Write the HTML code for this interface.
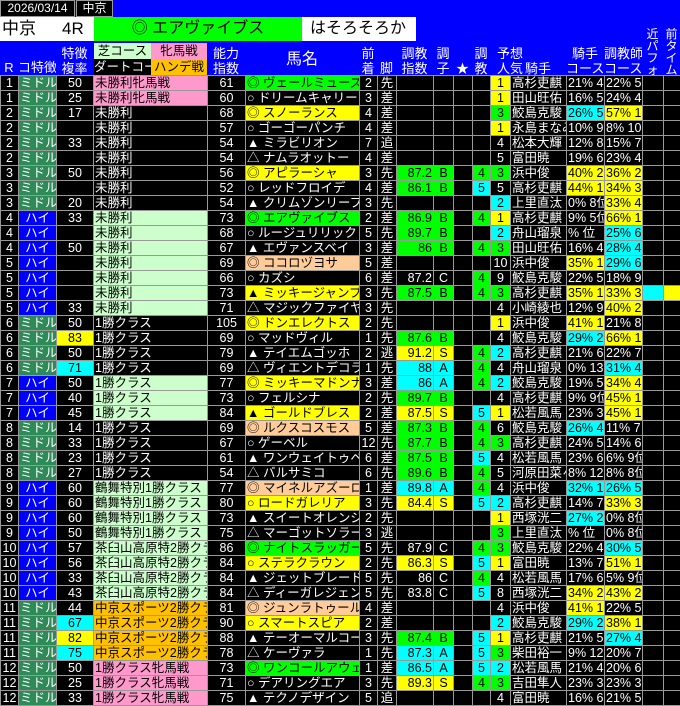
<!DOCTYPE html>
<html><head><meta charset="utf-8"><style>
*{margin:0;padding:0;box-sizing:border-box}
body{width:680px;height:705px;background:#0000ff;overflow:hidden;position:relative;font-family:"Liberation Sans","Noto Sans CJK JP",sans-serif;color:#fff}
.a{position:absolute;white-space:nowrap;overflow:hidden}
table{position:absolute;left:0;top:75px;border-collapse:collapse;table-layout:fixed;width:680px}
td{height:15px;border:1px solid #999;background:#000;color:#fff;font-size:12.5px;line-height:13px;padding:0 1px;text-align:center;white-space:nowrap;overflow:hidden}
td.L{text-align:left}td.r{text-align:right}
.m{background:#2e8b57}.h{background:#0000ff}
.g{background:#00ff00;color:#000}.y{background:#ffff00;color:#000}.c{background:#00ffff;color:#000}
.p{background:#ffcc99;color:#000}.k{background:#ff99cc;color:#000}.l{background:#ccffcc;color:#000}.o{background:#ffc000;color:#000}
.hd{font-size:13px;line-height:15px;text-align:center;color:#fff}
</style></head><body>
<div class="a" style="left:0;top:0;width:75px;height:17px;background:#000;border:1px solid #999;font-size:12px;line-height:15px;text-align:center">2026/03/14</div>
<div class="a" style="left:76px;top:0;width:37px;height:17px;background:#000;border:1px solid #999;font-size:12px;line-height:15px;text-align:center">中京</div>
<div class="a" style="left:0;top:17px;width:94px;height:24px;background:#fff;color:#000;font-size:17px;line-height:24px;padding-left:2px">中京<span style="margin-left:26px">4R</span></div>
<div class="a" style="left:94px;top:17px;width:208px;height:24px;background:#00ff00;color:#000;font-size:16px;line-height:24px;text-align:center">◎ エアヴァイブス</div>
<div class="a" style="left:302px;top:17px;width:114px;height:24px;background:#fff;color:#000;font-size:16px;line-height:24px;padding-left:8px">はそろそろか</div>

<div class="a hd" style="left:0;top:60px;width:18px">R</div>
<div class="a hd" style="left:18px;top:60px;width:38px">コ特徴</div>
<div class="a hd" style="left:56px;top:46px;width:37px">特徴<br>複率</div>
<div class="a" style="left:94px;top:43px;width:57px;height:16px;background:#ccffcc;color:#000;font-size:12.5px;line-height:16px;text-align:center">芝コース</div>
<div class="a" style="left:151px;top:43px;width:56px;height:16px;background:#ff99cc;color:#000;font-size:12.5px;line-height:16px;text-align:center">牝馬戦</div>
<div class="a" style="left:94px;top:59px;width:57px;height:16px;background:#000;color:#fff;font-size:12.5px;line-height:16px">ダートコー.</div>
<div class="a" style="left:151px;top:59px;width:56px;height:16px;background:#ffc000;color:#000;font-size:12.5px;line-height:16px;text-align:center">ハンデ戦</div>
<div class="a hd" style="left:207px;top:46px;width:38px">能力<br>指数</div>
<div class="a hd" style="left:245px;top:50px;width:114px;font-size:16px;line-height:20px">馬名</div>
<div class="a hd" style="left:359px;top:46px;width:18px">前<br>着</div>
<div class="a hd" style="left:377px;top:61px;width:19px">脚</div>
<div class="a hd" style="left:396px;top:46px;width:37px">調教<br>指数</div>
<div class="a hd" style="left:433px;top:46px;width:20px">調<br>子</div>
<div class="a hd" style="left:453px;top:61px;width:19px">★</div>
<div class="a hd" style="left:472px;top:46px;width:18px">調<br>教</div>
<div class="a hd" style="left:490px;top:46px;width:40px">予想<br>人気</div>
<div class="a hd" style="left:566px;top:61px;width:1px"></div>
<div class="a hd" style="left:510px;top:61px;width:56px">騎手</div>
<div class="a hd" style="left:566px;top:46px;width:38px">騎手<br>コース</div>
<div class="a hd" style="left:604px;top:46px;width:38px">調教師<br>コース</div>
<div class="a hd" style="left:642px;top:28px;width:21px;line-height:12px;font-size:12px">近<br>パ<br>フ<br>ォ</div>
<div class="a hd" style="left:663px;top:28px;width:17px;line-height:12px;font-size:12px">前<br>タ<br>イ<br>ム</div>

<table>
<colgroup><col style="width:18px"><col style="width:38px"><col style="width:37px"><col style="width:114px"><col style="width:38px"><col style="width:114px"><col style="width:18px"><col style="width:19px"><col style="width:37px"><col style="width:20px"><col style="width:19px"><col style="width:18px"><col style="width:20px"><col style="width:56px"><col style="width:38px"><col style="width:38px"><col style="width:21px"><col style="width:17px"></colgroup>
<tr><td>1</td><td class=m>ミドル</td><td>50</td><td class="L k">未勝利牝馬戦</td><td>61</td><td class="L g">◎ ヴェールミューズ</td><td>2</td><td>先</td><td></td><td></td><td></td><td></td><td class=y>1</td><td class=L>高杉吏麒</td><td class=L>21% 4·</td><td class=L>22% 5·</td><td></td><td></td></tr>
<tr><td>1</td><td class=m>ミドル</td><td>25</td><td class="L k">未勝利牝馬戦</td><td>60</td><td class=L>○ ドリームキャリー</td><td>3</td><td>差</td><td></td><td></td><td></td><td></td><td class=y>1</td><td class=L>田山旺佑</td><td class=L>16% 5·</td><td class=L>24% 4·</td><td></td><td></td></tr>
<tr><td>2</td><td class=m>ミドル</td><td>17</td><td class=L>未勝利</td><td>68</td><td class="L y">◎ スノーランス</td><td>4</td><td>差</td><td></td><td></td><td></td><td></td><td class=g>3</td><td class=L>鮫島克駿</td><td class="L c">26% 5·</td><td class="L y">57% 1·</td><td></td><td></td></tr>
<tr><td>2</td><td class=m>ミドル</td><td></td><td class=L>未勝利</td><td>57</td><td class=L>○ ゴーゴーパンチ</td><td>4</td><td>差</td><td></td><td></td><td></td><td></td><td class=y>1</td><td class=L>永島まなみ</td><td class=L>10% 9·</td><td class=L>8% 10·</td><td></td><td></td></tr>
<tr><td>2</td><td class=m>ミドル</td><td>33</td><td class=L>未勝利</td><td>54</td><td class=L>▲ ミラビリオン</td><td>7</td><td>追</td><td></td><td></td><td></td><td></td><td>4</td><td class=L>松本大輝</td><td class=L>12% 8·</td><td class=L>15% 7·</td><td></td><td></td></tr>
<tr><td>2</td><td class=m>ミドル</td><td></td><td class=L>未勝利</td><td>54</td><td class=L>△ ナムラオットー</td><td>4</td><td>差</td><td></td><td></td><td></td><td></td><td>5</td><td class=L>富田暁</td><td class=L>19% 6·</td><td class=L>23% 4·</td><td></td><td></td></tr>
<tr><td>3</td><td class=m>ミドル</td><td>50</td><td class=L>未勝利</td><td>56</td><td class="L y">◎ アピラーシャ</td><td>3</td><td>先</td><td class="r g">87.2</td><td class=g>B</td><td></td><td class=g>4</td><td class=g>3</td><td class=L>浜中俊</td><td class="L y">40% 2·</td><td class="L y">36% 2·</td><td></td><td></td></tr>
<tr><td>3</td><td class=m>ミドル</td><td></td><td class=L>未勝利</td><td>52</td><td class=L>○ レッドフロイデ</td><td>4</td><td>差</td><td class="r g">86.1</td><td class=g>B</td><td></td><td class=c>5</td><td>5</td><td class=L>高杉吏麒</td><td class="L y">44% 1·</td><td class="L y">34% 3·</td><td></td><td></td></tr>
<tr><td>3</td><td class=m>ミドル</td><td>20</td><td class=L>未勝利</td><td>54</td><td class=L>▲ クリムゾンリーフ</td><td>3</td><td>先</td><td></td><td></td><td></td><td></td><td class=c>2</td><td class=L>上里直汰</td><td class=L>0% 8位</td><td class="L y">33% 4·</td><td></td><td></td></tr>
<tr><td>4</td><td class=h>ハイ</td><td>33</td><td class="L l">未勝利</td><td>73</td><td class="L g">◎ エアヴァイブス</td><td>2</td><td>差</td><td class="r g">86.9</td><td class=g>B</td><td></td><td class=g>4</td><td class=y>1</td><td class=L>高杉吏麒</td><td class=L>9% 5位</td><td class="L y">66% 1·</td><td></td><td></td></tr>
<tr><td>4</td><td class=h>ハイ</td><td></td><td class="L l">未勝利</td><td>68</td><td class=L>○ ルージュリリック</td><td>5</td><td>先</td><td class="r g">89.7</td><td class=g>B</td><td></td><td></td><td class=c>2</td><td class=L>舟山瑠泉</td><td class=L>% 位</td><td class="L c">25% 6·</td><td></td><td></td></tr>
<tr><td>4</td><td class=h>ハイ</td><td>50</td><td class="L l">未勝利</td><td>67</td><td class=L>▲ エヴァンスベイ</td><td>3</td><td>差</td><td class="r g">86</td><td class=g>B</td><td></td><td class=g>4</td><td class=g>3</td><td class=L>田山旺佑</td><td class=L>16% 4·</td><td class="L c">28% 4·</td><td></td><td></td></tr>
<tr><td>5</td><td class=h>ハイ</td><td></td><td class="L l">未勝利</td><td>69</td><td class="L p">◎ ココロヅヨサ</td><td>5</td><td>差</td><td></td><td></td><td></td><td></td><td>10</td><td class=L>浜中俊</td><td class="L y">35% 1·</td><td class="L c">29% 6·</td><td></td><td></td></tr>
<tr><td>5</td><td class=h>ハイ</td><td></td><td class="L l">未勝利</td><td>66</td><td class=L>○ カズシ</td><td>6</td><td>差</td><td class=r>87.2</td><td>C</td><td></td><td class=g>4</td><td>9</td><td class=L>鮫島克駿</td><td class=L>22% 5·</td><td class=L>18% 9·</td><td></td><td></td></tr>
<tr><td>5</td><td class=h>ハイ</td><td></td><td class="L l">未勝利</td><td>73</td><td class="L y">▲ ミッキージャンプ</td><td>3</td><td>先</td><td class="r g">87.5</td><td class=g>B</td><td></td><td class=g>4</td><td class=g>3</td><td class=L>高杉吏麒</td><td class="L y">35% 1·</td><td class="L y">33% 3·</td><td class=c></td><td class=y></td></tr>
<tr><td>5</td><td class=h>ハイ</td><td>33</td><td class="L l">未勝利</td><td>71</td><td class=L>△ マジックファイヤー</td><td>3</td><td>先</td><td></td><td></td><td></td><td></td><td>4</td><td class=L>小崎綾也</td><td class=L>12% 9·</td><td class="L y">40% 2·</td><td></td><td></td></tr>
<tr><td>6</td><td class=m>ミドル</td><td>50</td><td class=L>1勝クラス</td><td>105</td><td class="L y">◎ ドンエレクトス</td><td>2</td><td>先</td><td></td><td></td><td></td><td></td><td class=y>1</td><td class=L>浜中俊</td><td class="L y">41% 1·</td><td class=L>21% 8·</td><td></td><td></td></tr>
<tr><td>6</td><td class=m>ミドル</td><td class=y>83</td><td class=L>1勝クラス</td><td>69</td><td class=L>○ マッドヴィル</td><td>1</td><td>先</td><td class="r g">87.6</td><td class=g>B</td><td></td><td></td><td>4</td><td class=L>鮫島克駿</td><td class="L c">29% 2·</td><td class="L y">66% 1·</td><td></td><td></td></tr>
<tr><td>6</td><td class=m>ミドル</td><td>50</td><td class=L>1勝クラス</td><td>79</td><td class=L>▲ テイエムゴッホ</td><td>2</td><td>逃</td><td class="r y">91.2</td><td class=y>S</td><td></td><td class=g>4</td><td class=c>2</td><td class=L>高杉吏麒</td><td class=L>21% 6·</td><td class=L>22% 7·</td><td></td><td></td></tr>
<tr><td>6</td><td class=m>ミドル</td><td class=c>71</td><td class=L>1勝クラス</td><td>69</td><td class=L>△ ヴィエントデコラ</td><td>1</td><td>先</td><td class="r c">88</td><td class=c>A</td><td></td><td class=g>4</td><td>4</td><td class=L>舟山瑠泉</td><td class=L>0% 13</td><td class="L c">31% 4·</td><td></td><td></td></tr>
<tr><td>7</td><td class=h>ハイ</td><td>50</td><td class="L l">1勝クラス</td><td>77</td><td class="L y">◎ ミッキーマドンナ</td><td>3</td><td>差</td><td class="r c">86</td><td class=c>A</td><td></td><td class=g>4</td><td class=c>2</td><td class=L>鮫島克駿</td><td class=L>19% 5·</td><td class="L y">34% 4·</td><td></td><td></td></tr>
<tr><td>7</td><td class=h>ハイ</td><td>40</td><td class="L l">1勝クラス</td><td>73</td><td class=L>○ フェルシナ</td><td>2</td><td>先</td><td class="r g">89.7</td><td class=g>B</td><td></td><td></td><td>4</td><td class=L>高杉吏麒</td><td class=L>9% 9位</td><td class="L y">45% 1·</td><td></td><td></td></tr>
<tr><td>7</td><td class=h>ハイ</td><td>45</td><td class="L l">1勝クラス</td><td>84</td><td class="L y">▲ ゴールドブレス</td><td>2</td><td>差</td><td class="r y">87.5</td><td class=y>S</td><td></td><td class=c>5</td><td class=y>1</td><td class=L>松若風馬</td><td class=L>23% 3·</td><td class="L y">45% 1·</td><td></td><td></td></tr>
<tr><td>8</td><td class=m>ミドル</td><td>14</td><td class=L>1勝クラス</td><td>69</td><td class="L p">◎ ルクスコスモス</td><td>5</td><td>差</td><td class="r g">87.3</td><td class=g>B</td><td></td><td class=g>4</td><td>6</td><td class=L>鮫島克駿</td><td class="L c">26% 4·</td><td class=L>11% 7·</td><td></td><td></td></tr>
<tr><td>8</td><td class=m>ミドル</td><td>33</td><td class=L>1勝クラス</td><td>67</td><td class=L>○ ゲーベル</td><td>12</td><td>先</td><td class="r g">87.7</td><td class=g>B</td><td></td><td class=g>4</td><td class=g>3</td><td class=L>高杉吏麒</td><td class=L>24% 5·</td><td class=L>14% 6·</td><td></td><td></td></tr>
<tr><td>8</td><td class=m>ミドル</td><td>23</td><td class=L>1勝クラス</td><td>61</td><td class=L>▲ ワンウェイトゥベル</td><td>6</td><td>差</td><td class="r g">87.5</td><td class=g>B</td><td></td><td class=c>5</td><td>4</td><td class=L>松若風馬</td><td class=L>23% 6·</td><td class=L>6% 9位</td><td></td><td></td></tr>
<tr><td>8</td><td class=m>ミドル</td><td>27</td><td class=L>1勝クラス</td><td>54</td><td class=L>△ バルサミコ</td><td>6</td><td>先</td><td class="r g">89.6</td><td class=g>B</td><td></td><td class=g>4</td><td>5</td><td class=L>河原田菜々</td><td class=L>8% 12·</td><td class=L>8% 8位</td><td></td><td></td></tr>
<tr><td>9</td><td class=h>ハイ</td><td>60</td><td class="L l">鶴舞特別1勝クラス</td><td>77</td><td class="L p">◎ マイネルアズーロ</td><td>1</td><td>差</td><td class="r c">89.8</td><td class=c>A</td><td></td><td class=g>4</td><td>4</td><td class=L>浜中俊</td><td class="L c">32% 1·</td><td class="L c">26% 5·</td><td></td><td></td></tr>
<tr><td>9</td><td class=h>ハイ</td><td>60</td><td class="L l">鶴舞特別1勝クラス</td><td>80</td><td class="L y">○ ロードガレリア</td><td>3</td><td>先</td><td class="r y">84.4</td><td class=y>S</td><td></td><td class=c>5</td><td class=c>2</td><td class=L>高杉吏麒</td><td class=L>14% 7·</td><td class="L y">33% 3·</td><td></td><td></td></tr>
<tr><td>9</td><td class=h>ハイ</td><td>60</td><td class="L l">鶴舞特別1勝クラス</td><td>73</td><td class=L>▲ スイートオレンジ</td><td>2</td><td>先</td><td></td><td></td><td></td><td></td><td class=y>1</td><td class=L>西塚洸二</td><td class="L c">27% 2·</td><td class=L>0% 8位</td><td></td><td></td></tr>
<tr><td>9</td><td class=h>ハイ</td><td>50</td><td class="L l">鶴舞特別1勝クラス</td><td>75</td><td class=L>△ マーゴットソラーレ</td><td>3</td><td>逃</td><td></td><td></td><td></td><td></td><td class=g>3</td><td class=L>上里直汰</td><td class=L>% 位</td><td class=L>0% 8位</td><td></td><td></td></tr>
<tr><td>10</td><td class=h>ハイ</td><td>57</td><td class="L l">茶臼山高原特2勝クラ.</td><td>86</td><td class="L g">◎ ナイトスラッガー</td><td>5</td><td>先</td><td class=r>87.9</td><td>C</td><td></td><td class=g>4</td><td class=g>3</td><td class=L>鮫島克駿</td><td class=L>22% 4·</td><td class="L c">30% 5·</td><td></td><td></td></tr>
<tr><td>10</td><td class=h>ハイ</td><td>56</td><td class="L l">茶臼山高原特2勝クラ.</td><td>84</td><td class="L y">○ ステラクラウン</td><td>2</td><td>先</td><td class="r y">86.3</td><td class=y>S</td><td></td><td class=c>5</td><td class=y>1</td><td class=L>富田暁</td><td class=L>13% 7·</td><td class="L y">51% 1·</td><td></td><td></td></tr>
<tr><td>10</td><td class=h>ハイ</td><td>33</td><td class="L l">茶臼山高原特2勝クラ.</td><td>84</td><td class=L>▲ ジェットブレード</td><td>5</td><td>先</td><td class=r>86</td><td>C</td><td></td><td class=g>4</td><td>4</td><td class=L>松若風馬</td><td class=L>17% 6·</td><td class=L>5% 9位</td><td></td><td></td></tr>
<tr><td>10</td><td class=h>ハイ</td><td>43</td><td class="L l">茶臼山高原特2勝クラ.</td><td>84</td><td class=L>△ ディーガレジェンド</td><td>5</td><td>先</td><td class=r>83.8</td><td>C</td><td></td><td class=c>5</td><td>8</td><td class=L>西塚洸二</td><td class="L y">34% 2·</td><td class="L y">43% 2·</td><td></td><td></td></tr>
<tr><td>11</td><td class=m>ミドル</td><td>44</td><td class="L o">中京スポーツ2勝クラ</td><td>81</td><td class="L p">◎ ジュンラトゥール</td><td>4</td><td>差</td><td></td><td></td><td></td><td></td><td>4</td><td class=L>浜中俊</td><td class="L y">41% 1·</td><td class=L>22% 5·</td><td></td><td></td></tr>
<tr><td>11</td><td class=m>ミドル</td><td class=c>67</td><td class="L o">中京スポーツ2勝クラ</td><td>90</td><td class="L y">○ スマートスピア</td><td>2</td><td>差</td><td></td><td></td><td></td><td></td><td class=c>2</td><td class=L>鮫島克駿</td><td class="L c">29% 2·</td><td class="L y">38% 1·</td><td></td><td></td></tr>
<tr><td>11</td><td class=m>ミドル</td><td class=y>82</td><td class="L o">中京スポーツ2勝クラ</td><td>88</td><td class=L>▲ テーオーマルコー</td><td>3</td><td>先</td><td class="r g">87.4</td><td class=g>B</td><td></td><td class=c>5</td><td class=y>1</td><td class=L>高杉吏麒</td><td class=L>21% 5·</td><td class="L c">27% 4·</td><td></td><td></td></tr>
<tr><td>11</td><td class=m>ミドル</td><td class=c>75</td><td class="L o">中京スポーツ2勝クラ</td><td>78</td><td class=L>△ ケーヴァラ</td><td>1</td><td>先</td><td class="r c">87.3</td><td class=c>A</td><td></td><td class=c>5</td><td class=g>3</td><td class=L>柴田裕一</td><td class=L>9% 12·</td><td class=L>20% 7·</td><td></td><td></td></tr>
<tr><td>12</td><td class=m>ミドル</td><td>50</td><td class="L k">1勝クラス牝馬戦</td><td>73</td><td class="L g">◎ ワンコールアウェイ</td><td>1</td><td>差</td><td class="r c">86.5</td><td class=c>A</td><td></td><td class=c>5</td><td class=c>2</td><td class=L>松若風馬</td><td class=L>21% 4·</td><td class=L>20% 6·</td><td></td><td></td></tr>
<tr><td>12</td><td class=m>ミドル</td><td>25</td><td class="L k">1勝クラス牝馬戦</td><td>71</td><td class=L>○ デアリングエア</td><td>3</td><td>先</td><td class="r y">89.3</td><td class=y>S</td><td></td><td class=g>4</td><td class=g>3</td><td class=L>吉田隼人</td><td class=L>23% 3·</td><td class=L>23% 3·</td><td></td><td></td></tr>
<tr><td>12</td><td class=m>ミドル</td><td>33</td><td class="L k">1勝クラス牝馬戦</td><td>75</td><td class=L>▲ テクノデザイン</td><td>5</td><td>追</td><td></td><td></td><td></td><td></td><td>4</td><td class=L>富田暁</td><td class=L>16% 6·</td><td class=L>21% 5·</td><td></td><td></td></tr>
</table>
</body></html>
